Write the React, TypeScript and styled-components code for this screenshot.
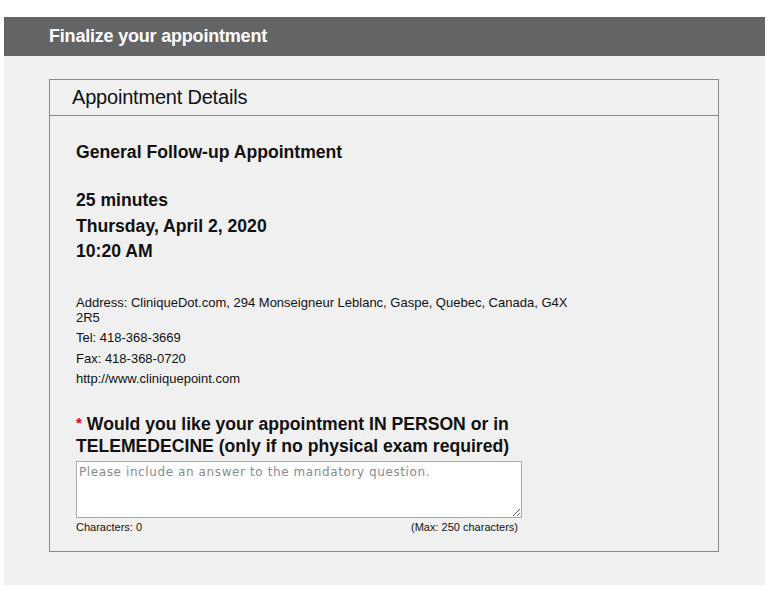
import React from "react";
import styled, { createGlobalStyle } from "styled-components";

const Global = createGlobalStyle`
  html, body { margin: 0; padding: 0; background: #ffffff; }
  body { font-family: "Liberation Sans", Arial, sans-serif; color: #111; }
`;

const Page = styled.div`
  padding: 17px 19px 0 4px;
`;

const Frame = styled.div`
  width: 761px;
  background: #f0f0f0;
`;

const TopBar = styled.div`
  height: 39px;
  background: #636466;
  display: flex;
  align-items: center;
  padding-left: 45px;
  box-sizing: border-box;
  color: #fff;
  font-weight: bold;
  font-size: 18px;
  letter-spacing: -0.2px;
`;

const Body = styled.div`
  padding: 23px 46px 33px 45px;
`;

const Card = styled.div`
  border: 1px solid #8a8a8a;
`;

const CardHeader = styled.div`
  height: 35px;
  display: flex;
  align-items: center;
  padding-left: 22px;
  font-size: 20px;
  border-bottom: 1px solid #8a8a8a;
  color: #111;
  letter-spacing: -0.2px;
`;

const CardBody = styled.div`
  padding: 25px 26px 18px 26px;
`;

const Title = styled.div`
  font-weight: bold;
  font-size: 17.6px;
  line-height: 22px;
  margin-bottom: 25px;
`;

const When = styled.div`
  font-weight: bold;
  font-size: 17.6px;
  line-height: 25.5px;
  margin-bottom: 30px;
`;

const Info = styled.div`
  font-size: 13px;
  line-height: 15px;
  width: 505px;
  margin-bottom: 5.5px;
`;

const Question = styled.div`
  font-weight: bold;
  font-size: 17.6px;
  line-height: 22px;
  margin-top: 27px;
  width: 450px;
`;

const Star = styled.span`
  display: inline-block;
  color: #e4001b;
  font-size: 15px;
  line-height: 0;
  vertical-align: 2px;
  margin-right: 5px;
`;

const TextArea = styled.textarea`
  display: block;
  box-sizing: border-box;
  width: 446px;
  height: 57px;
  margin-top: 4px;
  border: 1px solid #a9a9a9;
  background: #fff;
  font-family: "DejaVu Sans", Verdana, sans-serif;
  font-size: 12px;
  letter-spacing: 0.6px;
  padding: 3px 2px;
  resize: vertical;
  &::placeholder { color: #8a8a8a; }
`;

const Counter = styled.div`
  display: flex;
  justify-content: space-between;
  width: 442px;
  font-size: 11px;
  margin-top: 3px;
`;

export default function App() {
  return (
    <>
      <Global />
      <Page>
        <Frame>
          <TopBar>Finalize your appointment</TopBar>
          <Body>
            <Card>
              <CardHeader>Appointment Details</CardHeader>
              <CardBody>
                <Title>General Follow-up Appointment</Title>
                <When>
                  <div>25 minutes</div>
                  <div>Thursday, April 2, 2020</div>
                  <div>10:20 AM</div>
                </When>
                <Info>Address: CliniqueDot.com, 294 Monseigneur Leblanc, Gaspe, Quebec, Canada, G4X 2R5</Info>
                <Info>Tel: 418-368-3669</Info>
                <Info>Fax: 418-368-0720</Info>
                <Info>http://www.cliniquepoint.com</Info>
                <Question>
                  <Star>*</Star>Would you like your appointment IN PERSON or in TELEMEDECINE (only if no physical exam required)
                </Question>
                <TextArea placeholder="Please include an answer to the mandatory question." />
                <Counter>
                  <span>Characters: 0</span>
                  <span>(Max: 250 characters)</span>
                </Counter>
              </CardBody>
            </Card>
          </Body>
        </Frame>
      </Page>
    </>
  );
}
